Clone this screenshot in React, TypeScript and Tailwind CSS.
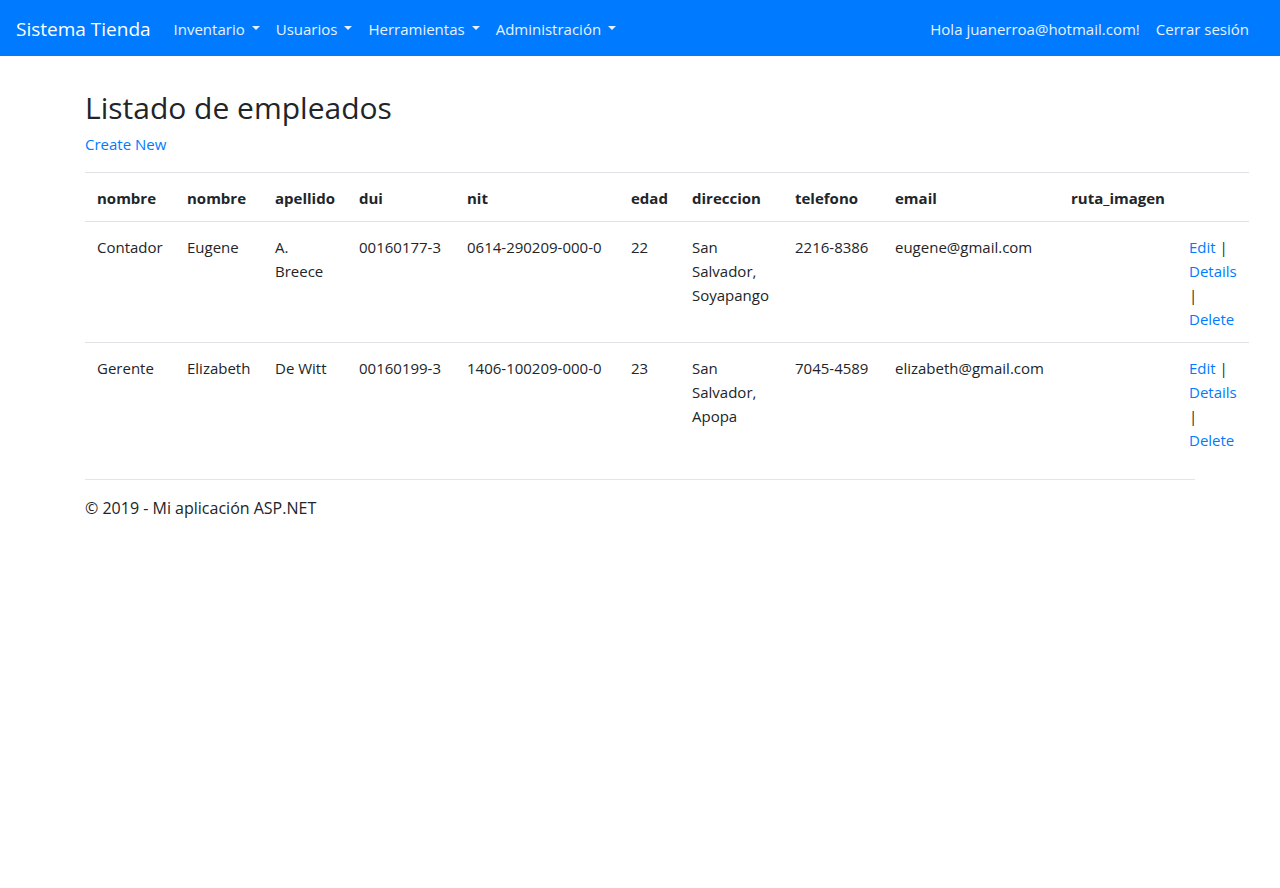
const menus = ['Inventario', 'Usuarios', 'Herramientas', 'Administración'];

const columns = [
  { label: 'nombre', width: 'w-[90px]' },
  { label: 'nombre', width: 'w-[88px]' },
  { label: 'apellido', width: 'w-[84px]' },
  { label: 'dui', width: 'w-[108px]' },
  { label: 'nit', width: 'w-[164px]' },
  { label: 'edad', width: 'w-[61px]' },
  { label: 'direccion', width: 'w-[103px]' },
  { label: 'telefono', width: 'w-[100px]' },
  { label: 'email', width: 'w-[176px]' },
  { label: 'ruta_imagen', width: 'w-[118px]' },
  { label: '', width: 'w-[72px]' },
];

const employees = [
  ['Contador', 'Eugene', 'A. Breece', '00160177-3', '0614-290209-000-0', '22', 'San Salvador, Soyapango', '2216-8386', 'eugene@gmail.com', ''],
  ['Gerente', 'Elizabeth', 'De Witt', '00160199-3', '1406-100209-000-0', '23', 'San Salvador, Apopa', '7045-4589', 'elizabeth@gmail.com', ''],
];

function Navbar() {
  return (
    <nav className="flex h-14 items-center bg-[#007bff] px-4 pt-0.5 text-[#e6f2ff]">
      <a href="#" className="mr-[15px] text-[19px] leading-[30px] text-white">
        Sistema Tienda
      </a>
      <ul className="flex flex-1">
        {menus.map((menu) => (
          <li key={menu}>
            <button type="button" className="flex items-center gap-[7px] p-2">
              {menu}
              <span className="mb-0.5 border-x-4 border-t-4 border-x-transparent border-t-current" />
            </button>
          </li>
        ))}
      </ul>
      <ul className="flex pr-[7px]">
        <li>
          <a href="#" className="block p-2">Hola juanerroa@hotmail.com!</a>
        </li>
        <li>
          <a href="#" className="block p-2">Cerrar sesión</a>
        </li>
      </ul>
    </nav>
  );
}

function RowActions() {
  return (
    <>
      <a href="#" className="text-[#007bff]">Edit</a> |{' '}
      <a href="#" className="text-[#007bff]">Details</a> |{' '}
      <a href="#" className="text-[#007bff]">Delete</a>
    </>
  );
}

export default function App() {
  return (
    <div className="min-h-screen bg-white font-['Open_Sans','Noto_Sans',sans-serif] text-[15px] leading-6 text-[#212529]">
      <Navbar />
      <main className="mx-auto max-w-[1140px] px-[15px] pt-8">
        <h2 className="mb-1 text-[30px] leading-10">Listado de empleados</h2>
        <p className="mb-4">
          <a href="#" className="text-[#007bff]">Create New</a>
        </p>
        <table className="mb-4 w-full min-w-[1164px] table-fixed text-left">
          <thead>
            <tr className="border-t border-[#dee2e6]">
              {columns.map((column, index) => (
                <th key={index} className={`${column.width} px-3 pt-[13px] pb-[11px] font-bold`}>
                  {column.label}
                </th>
              ))}
            </tr>
          </thead>
          <tbody>
            {employees.map((employee) => (
              <tr key={employee[1]} className="border-t border-[#dee2e6] align-top">
                {employee.map((value, index) => (
                  <td key={index} className="px-3 pt-[13px] pb-[11px]">{value}</td>
                ))}
                <td className="px-3 pt-[13px] pb-[11px]"><RowActions /></td>
              </tr>
            ))}
          </tbody>
        </table>
        <hr className="mb-4 border-[#e5e5e5]" />
        <footer>
          <p className="text-base">© 2019 - Mi aplicación ASP.NET</p>
        </footer>
      </main>
    </div>
  );
}
